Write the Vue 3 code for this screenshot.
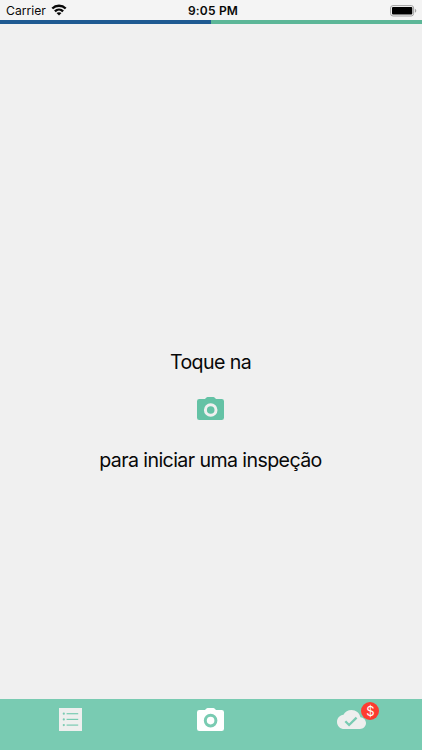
<script setup>
import { ref } from 'vue'

const carrier = ref('Carrier')
const time = ref('9:05 PM')
const badge = ref('$')
</script>

<template>
  <div class="screen">
    <header class="status-bar">
      <div class="carrier">
        <span>{{ carrier }}</span>
        <svg class="wifi" width="16" height="12" viewBox="0 0 16 12">
          <g fill="none" stroke="#080808" stroke-width="2.4">
            <path d="M1.3 4.5C5 .9 11 .9 14.7 4.5" />
            <path d="M3.9 7.3C6.2 5.1 9.8 5.1 12.1 7.3" />
          </g>
          <path d="M5.5 9.1C7 7.9 9 7.9 10.5 9.1L8 11.5Z" fill="#080808" />
        </svg>
      </div>
      <div class="time">{{ time }}</div>
      <div class="battery">
        <svg width="27" height="12" viewBox="0 0 27 12">
          <rect x="0.6" y="0.6" width="23" height="10.4" rx="2.4" fill="#f4f4f4" stroke="#a2a2a2" />
          <rect x="2" y="2" width="20.3" height="7.6" rx="1" fill="#000" />
          <path d="M24.9 3.8Q26.3 4.3 26.3 5.8T24.9 7.8Z" fill="#a2a2a2" />
        </svg>
      </div>
    </header>

    <div class="segments">
      <div class="segment active"></div>
      <div class="segment"></div>
    </div>

    <main class="content">
      <p class="hint first">Toque na</p>
      <svg class="camera" width="27" height="23" viewBox="0 0 27 23">
        <path
          fill="#64c2a5"
          d="M8 2 9.2.7Q9.8 0 10.7 0H16.3Q17.2 0 17.8.7L19 2H24.7Q27 2 27 4.3V20.7Q27 23 24.7 23H2.3Q0 23 0 20.7V4.3Q0 2 2.3 2Z"
        />
        <circle cx="13.7" cy="13" r="5.3" fill="none" stroke="#f0f0f0" stroke-width="3" />
      </svg>
      <p class="hint second">para iniciar uma inspeção</p>
    </main>

    <nav class="tabs">
      <div class="tab">
        <svg width="23" height="23" viewBox="0 0 23 23">
          <rect width="23" height="23" fill="#eeefee" />
          <g fill="#79cbb2">
            <circle cx="4.8" cy="5.7" r="1.1" />
            <circle cx="4.8" cy="11.4" r="1.1" />
            <circle cx="4.8" cy="17.1" r="1.1" />
            <rect x="7.6" y="5.1" width="11.6" height="1.2" />
            <rect x="7.6" y="10.8" width="11.6" height="1.2" />
            <rect x="7.6" y="16.5" width="11.6" height="1.2" />
          </g>
        </svg>
      </div>
      <div class="tab middle">
        <svg width="27" height="23" viewBox="0 0 27 23">
          <path
            fill="#fff"
            d="M8 2 9.2.7Q9.8 0 10.7 0H16.3Q17.2 0 17.8.7L19 2H24.7Q27 2 27 4.3V20.7Q27 23 24.7 23H2.3Q0 23 0 20.7V4.3Q0 2 2.3 2Z"
          />
          <circle cx="13.6" cy="12.6" r="5.3" fill="none" stroke="#79cbb2" stroke-width="3" />
        </svg>
      </div>
      <div class="tab">
        <div class="cloud">
          <svg width="29" height="19" viewBox="0 4 24 16" preserveAspectRatio="none">
            <path
              fill="#eeefee"
              d="M19.35 10.04C18.67 6.59 15.64 4 12 4 9.11 4 6.6 5.64 5.35 8.04 2.34 8.36 0 10.91 0 14c0 3.31 2.69 6 6 6h13c2.76 0 5-2.24 5-5 0-2.64-2.05-4.78-4.65-4.96z"
            />
            <path d="M6.9 13.5 10 16.6 16.2 10.4" fill="none" stroke="#79cbb2" stroke-width="1.9" />
          </svg>
          <span class="badge">{{ badge }}</span>
        </div>
      </div>
    </nav>
  </div>
</template>

<style>
body {
  margin: 0;
  background: #f0f0f0;
}
</style>

<style scoped>
.screen {
  display: flex;
  flex-direction: column;
  height: 750px;
  overflow: hidden;
  background: #f0f0f0;
  color: #080808;
  font-family: Inter, 'Liberation Sans', sans-serif;
}

.status-bar {
  display: grid;
  grid-template-columns: 1fr auto 1fr;
  height: 20px;
  padding: 0 5px 0 6px;
  background: #f4f4f4;
  font-size: 12.2px;
  line-height: 22px;
}

.carrier {
  display: flex;
  gap: 5px;
}

.wifi {
  margin-top: 4px;
}

.time {
  padding-left: 3px;
  font-size: 12px;
  font-weight: 600;
  letter-spacing: 0.2px;
}

.battery {
  display: flex;
  justify-content: flex-end;
  padding-top: 5px;
}

.segments {
  display: flex;
  height: 4px;
}

.segment {
  flex: 1;
  background: #5cb697;
}

.segment.active {
  background: #1f5a92;
}

.content {
  flex: 1;
  display: flex;
  flex-direction: column;
  align-items: center;
  padding-right: 1px;
}

.hint {
  margin: 0;
  font-size: 19.6px;
  line-height: 24px;
  letter-spacing: -0.6px;
  white-space: nowrap;
}

.first {
  margin-top: 326px;
}

.camera {
  margin-top: 23px;
}

.second {
  margin-top: 28px;
}

.tabs {
  display: flex;
  height: 51px;
  background: #79cbb2;
}

.tab {
  flex: 1;
  display: flex;
  justify-content: center;
  padding-top: 9px;
}

.middle {
  padding-right: 1px;
}

.cloud {
  position: relative;
  height: 19px;
  margin-top: 2px;
}

.cloud svg {
  display: block;
}

.badge {
  position: absolute;
  top: -8px;
  left: 24px;
  width: 18px;
  height: 18px;
  border-radius: 50%;
  background: #fd3b30;
  color: #fff;
  font-size: 13px;
  line-height: 18px;
  text-align: center;
}
</style>
